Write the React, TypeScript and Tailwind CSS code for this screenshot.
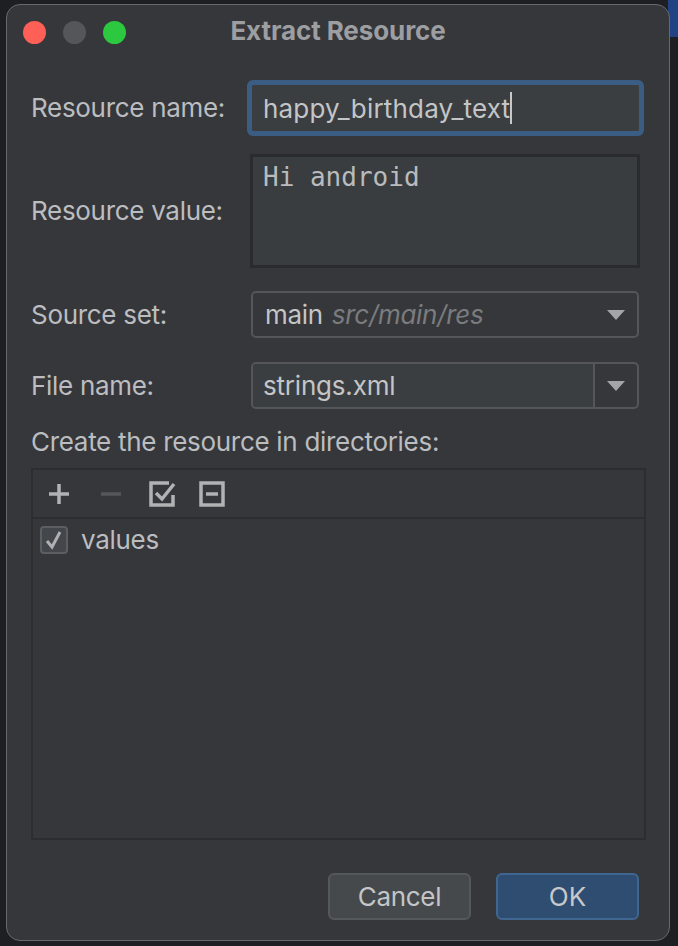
import React from "react";

const Arrow = () => (
  <svg width="18" height="10" viewBox="0 0 18 10">
    <path d="M0 0 H18 L9 10 Z" fill="#a3a5a8" />
  </svg>
);

const Label = ({ children }: { children: React.ReactNode }) => (
  <div className="w-[216px] shrink-0 text-[26px] leading-[30px] tracking-[-0.3px] text-[#bbbdc0]">{children}</div>
);

const App = () => {
  return (
    <div
      className="relative w-[678px] h-[946px] overflow-hidden bg-[#1e1f22] pt-[4px] pl-[6px]"
      style={{ fontFamily: "Inter, 'Liberation Sans', sans-serif" }}
    >
      <div className="absolute right-0 top-0 w-[10px] h-[37px] bg-[#214283]" />
      <div className="relative w-[664px] h-[937px] rounded-[14px] border border-[#68696c] bg-[#36373a] flex flex-col">
        {/* title bar */}
        <div className="h-[54px] grid grid-cols-[1fr_auto_1fr] items-center">
          <div className="flex items-center gap-[17px] pl-[16px]">
            <span className="w-[23px] h-[23px] rounded-full bg-[#fe5f57]" />
            <span className="w-[23px] h-[23px] rounded-full bg-[#54565a]" />
            <span className="w-[23px] h-[23px] rounded-full bg-[#2bc840]" />
          </div>
          <div className="pb-[3px] text-[26px] font-bold text-[#9d9ea1] tracking-[-0.1px]">Extract Resource</div>
          <div />
        </div>

        <div className="flex flex-col pl-[24px]">
          {/* resource name */}
          <div className="flex items-center mt-[21px]">
            <Label>Resource name:</Label>
            <div className="w-[397px] h-[56px] rounded-[6px] border-[5px] border-[#3b5d84] bg-[#3b3e40] flex items-center pl-[11px]">
              <span className="text-[26px] text-[#c3c5c7] tracking-[0.2px]">happy_birthday_text</span>
              <span className="w-[2px] h-[32px] bg-[#c8c8c8]" />
            </div>
          </div>

          {/* resource value */}
          <div className="flex items-center mt-[18px]">
            <Label>Resource value:</Label>
            <div className="ml-[3px] w-[390px] h-[114px] border-[3px] border-[#2a2b2d] bg-[#3a3d3f] pl-[10px] pt-[5px]">
              <span
                className="text-[26px] leading-[30px] text-[#b9bbbd]"
                style={{ fontFamily: "'DejaVu Sans Mono', 'Liberation Mono', monospace" }}
              >
                Hi android
              </span>
            </div>
          </div>

          {/* source set */}
          <div className="flex items-center mt-[23px]">
            <Label>Source set:</Label>
            <div className="ml-[4px] w-[388px] h-[47px] rounded-[5px] border-2 border-[#545659] flex items-center pl-[12px] pr-[12px] tracking-[-0.3px]">
              <span className="text-[26px] text-[#c3c5c7]">main</span>
              <span className="ml-[9px] text-[26px] italic text-[#7a7c7f]">src/main/res</span>
              <span className="ml-auto flex">
                <Arrow />
              </span>
            </div>
          </div>

          {/* file name */}
          <div className="flex items-center mt-[24px]">
            <Label>File name:</Label>
            <div className="ml-[4px] w-[388px] h-[47px] rounded-[5px] border-2 border-[#545659] flex overflow-hidden">
              <div className="flex-1 bg-[#3b3e40] flex items-center pl-[10px] text-[26px] tracking-[-0.2px] text-[#c3c5c7]">
                strings.xml
              </div>
              <div className="w-[44px] border-l-2 border-[#545659] flex items-center justify-center">
                <Arrow />
              </div>
            </div>
          </div>

          <div className="mt-[18px] text-[26px] leading-[30px] tracking-[-0.3px] text-[#bbbdc0]">
            Create the resource in directories:
          </div>

          {/* directories panel */}
          <div className="mt-[11px] w-[615px] h-[372px] border-2 border-[#2c2d30] flex flex-col">
            <div className="h-[49px] border-b-2 border-[#2c2d30] flex items-center pl-[14px]">
              <svg width="24" height="24" viewBox="0 0 24 24" className="mr-[28px]">
                <path d="M12 2 V22 M2 12 H22" stroke="#b0b2b4" strokeWidth="3.5" />
              </svg>
              <svg width="24" height="24" viewBox="0 0 24 24" className="mr-[26px]">
                <path d="M2 12 H22" stroke="#55575a" strokeWidth="3.5" />
              </svg>
              <svg width="28" height="26" viewBox="0 0 28 26" className="mr-[22px]">
                <path d="M20 2 H2 V24 H24 V14" stroke="#b0b2b4" strokeWidth="3.5" fill="none" />
                <path d="M7 12 L13 18 L25 3" stroke="#b0b2b4" strokeWidth="3.5" fill="none" />
              </svg>
              <svg width="26" height="26" viewBox="0 0 26 26">
                <rect x="2" y="2" width="22" height="22" stroke="#b0b2b4" strokeWidth="3.5" fill="none" />
                <path d="M7 13 H19" stroke="#b0b2b4" strokeWidth="3.5" />
              </svg>
            </div>
            <div className="flex items-center pl-[7px] pt-[6px]">
              <div className="w-[28px] h-[28px] rounded-[4px] border-2 border-[#5c5f62] bg-[#43464a] flex items-center justify-center">
                <svg width="20" height="20" viewBox="0 0 20 20">
                  <path d="M3 11 L8 17 L16 2" stroke="#aeb0b2" strokeWidth="3" fill="none" />
                </svg>
              </div>
              <span className="ml-[13px] text-[26px] leading-[30px] tracking-[-0.3px] text-[#bbbdc0]">values</span>
            </div>
          </div>
        </div>

        {/* buttons */}
        <div className="mt-[33px] flex justify-end gap-[25px] pr-[30px]">
          <div className="w-[143px] h-[47px] rounded-[6px] border-2 border-[#55585b] bg-[#46494c] flex items-center justify-center text-[26px] tracking-[-0.3px] text-[#c3c5c7]">
            Cancel
          </div>
          <div className="w-[143px] h-[47px] rounded-[6px] border-2 border-[#3f6690] bg-[#2f4d71] flex items-center justify-center text-[26px] text-[#c6c8ca]">
            OK
          </div>
        </div>
      </div>
    </div>
  );
};

export default App;
